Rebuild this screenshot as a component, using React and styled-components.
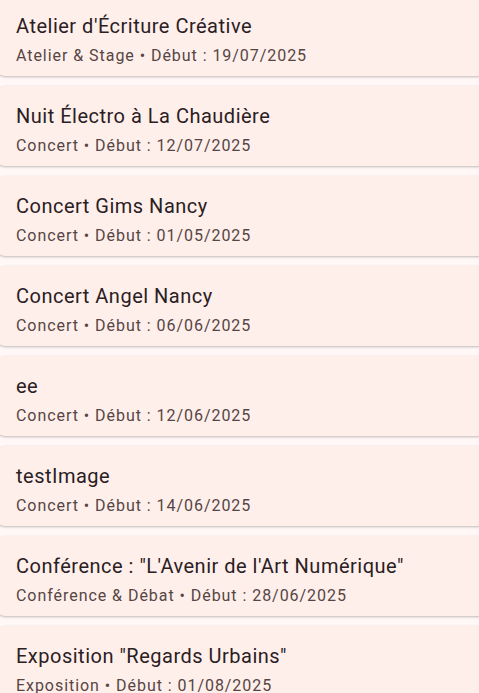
import styled, { createGlobalStyle } from 'styled-components';

const events = [
    { title: "Atelier d'Écriture Créative", category: 'Atelier & Stage', date: '19/07/2025' },
    { title: 'Nuit Électro à La Chaudière', category: 'Concert', date: '12/07/2025' },
    { title: 'Concert Gims Nancy', category: 'Concert', date: '01/05/2025' },
    { title: 'Concert Angel Nancy', category: 'Concert', date: '06/06/2025' },
    { title: 'ee', category: 'Concert', date: '12/06/2025' },
    { title: 'testImage', category: 'Concert', date: '14/06/2025' },
    { title: 'Conférence : "L\'Avenir de l\'Art Numérique"', category: 'Conférence & Débat', date: '28/06/2025' },
    { title: 'Exposition "Regards Urbains"', category: 'Exposition', date: '01/08/2025' },
];

export default function App() {
    return (
        <>
            <GlobalStyle />
            <EventList>
                {events.map((ev) => (
                    <EventCard key={ev.title}>
                        <Title>{ev.title}</Title>
                        <Subtitle>{ev.category} • Début : {ev.date}</Subtitle>
                    </EventCard>
                ))}
            </EventList>
        </>
    )
}

const GlobalStyle = createGlobalStyle`
    html, body {
        margin: 0;
        padding: 0;
        background: #fff8f6;
        overflow: hidden;
    }
    body {
        font-family: Roboto, "Noto Sans", sans-serif;
    }
`

const EventList = styled.div`
    display: flex;
    flex-direction: column;
    gap: 10px;

    margin: -4px -10px 0 -6px;
`

const EventCard = styled.div`
    height: 80px;
    box-sizing: border-box;
    padding: 16px 22px 0;

    display: flex;
    flex-direction: column;
    gap: 6px;

    background: #ffefeb;
    border-radius: 12px;
    box-shadow: 0 1px 2px rgba(0, 0, 0, 0.18), 0 1px 3px 1px rgba(0, 0, 0, 0.06);
`

const Title = styled.div`
    font-size: 20px;
    line-height: 28px;
    letter-spacing: 0.5px;
    color: #2a201f;
`

const Subtitle = styled.div`
    font-size: 16px;
    line-height: 20px;
    letter-spacing: 0.95px;
    color: #564543;
`
